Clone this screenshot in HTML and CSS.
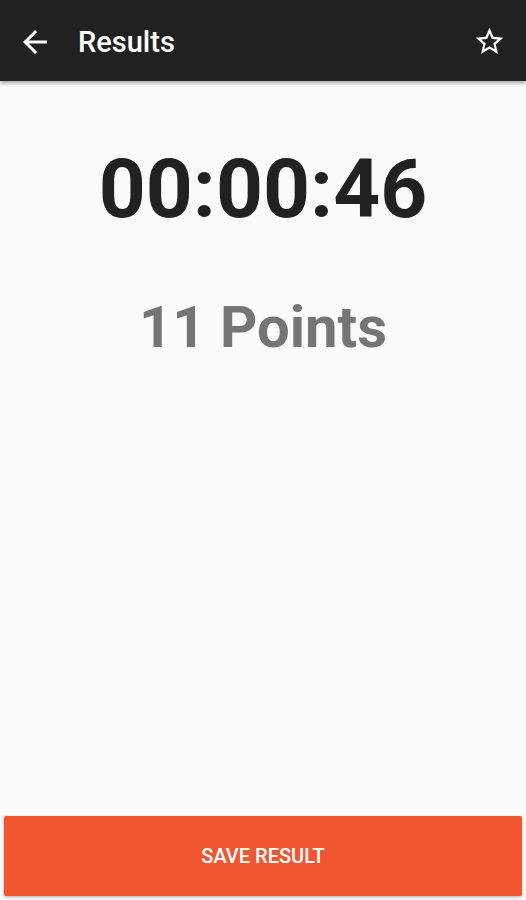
FILE: index.html
```html
<!DOCTYPE html>
<html lang="en">
<head>
  <meta charset="UTF-8">
  <meta name="viewport" content="width=device-width, initial-scale=1.0">
  <title>Results</title>
  <link rel="stylesheet" href="styles.css">
</head>
<body>
  <div class="app">
    <header class="toolbar">
      <button class="icon-btn back">
        <svg width="36" height="36" viewBox="0 0 24 24"><path d="M20 11H7.83l5.59-5.59L12 4l-8 8 8 8 1.41-1.41L7.830 13H20v-2z" fill="#fff"/></svg>
      </button>
      <h1 class="title">Results</h1>
      <button class="icon-btn star">
        <svg width="33" height="33" viewBox="0 0 24 24"><path d="M22 9.24l-7.19-.62L12 2 9.19 8.63 2 9.24l5.46 4.73L5.82 21 12 17.27 18.18 21l-1.63-7.03L22 9.24zM12 15.4l-3.76 2.27 1-4.28-3.32-2.88 4.38-.38L12 6.1l1.71 4.04 4.38.38-3.32 2.88 1 4.28L12 15.4z" fill="#fff"/></svg>
      </button>
    </header>

    <main class="content">
      <div class="timer">00:00:46</div>
      <div class="points">11 Points</div>
    </main>

    <div class="footer">
      <button class="save-btn">SAVE RESULT</button>
    </div>
  </div>
</body>
</html>
```

FILE: styles.css
```css
body {
  margin: 0;
  font-family: Roboto, "Noto Sans", Arial, sans-serif;
  background-color: #fafafa;
}

.app {
  display: flex;
  flex-direction: column;
  height: 900px;
}

.toolbar {
  height: 81px;
  background-color: #212121;
  display: flex;
  align-items: center;
  padding: 2px 20px 0 17px;
  box-sizing: border-box;
  box-shadow: 0 2px 4px rgba(0, 0, 0, 0.35);
  flex-shrink: 0;
}

.icon-btn {
  background: none;
  border: none;
  padding: 0;
  display: flex;
  align-items: center;
  cursor: pointer;
}

.title {
  margin: 0 0 0 25px;
  color: #fff;
  font-size: 29px;
  font-weight: 500;
  flex: 1;
}

.content {
  flex: 1;
  display: flex;
  flex-direction: column;
  align-items: center;
}

.timer {
  margin-top: 58px;
  font-size: 82px;
  font-weight: 700;
  color: #212121;
  line-height: 100px;
}

.points {
  margin-top: 53px;
  font-size: 58px;
  font-weight: 700;
  color: #757575;
  line-height: 70px;
}

.footer {
  padding: 0 4px 4px;
}

.save-btn {
  width: 100%;
  height: 80px;
  background-color: #f15631;
  border: none;
  border-radius: 2px;
  color: #fff;
  font-family: inherit;
  font-size: 20px;
  font-weight: 500;
  box-shadow: 0 1px 3px rgba(0, 0, 0, 0.3);
  cursor: pointer;
}
```
